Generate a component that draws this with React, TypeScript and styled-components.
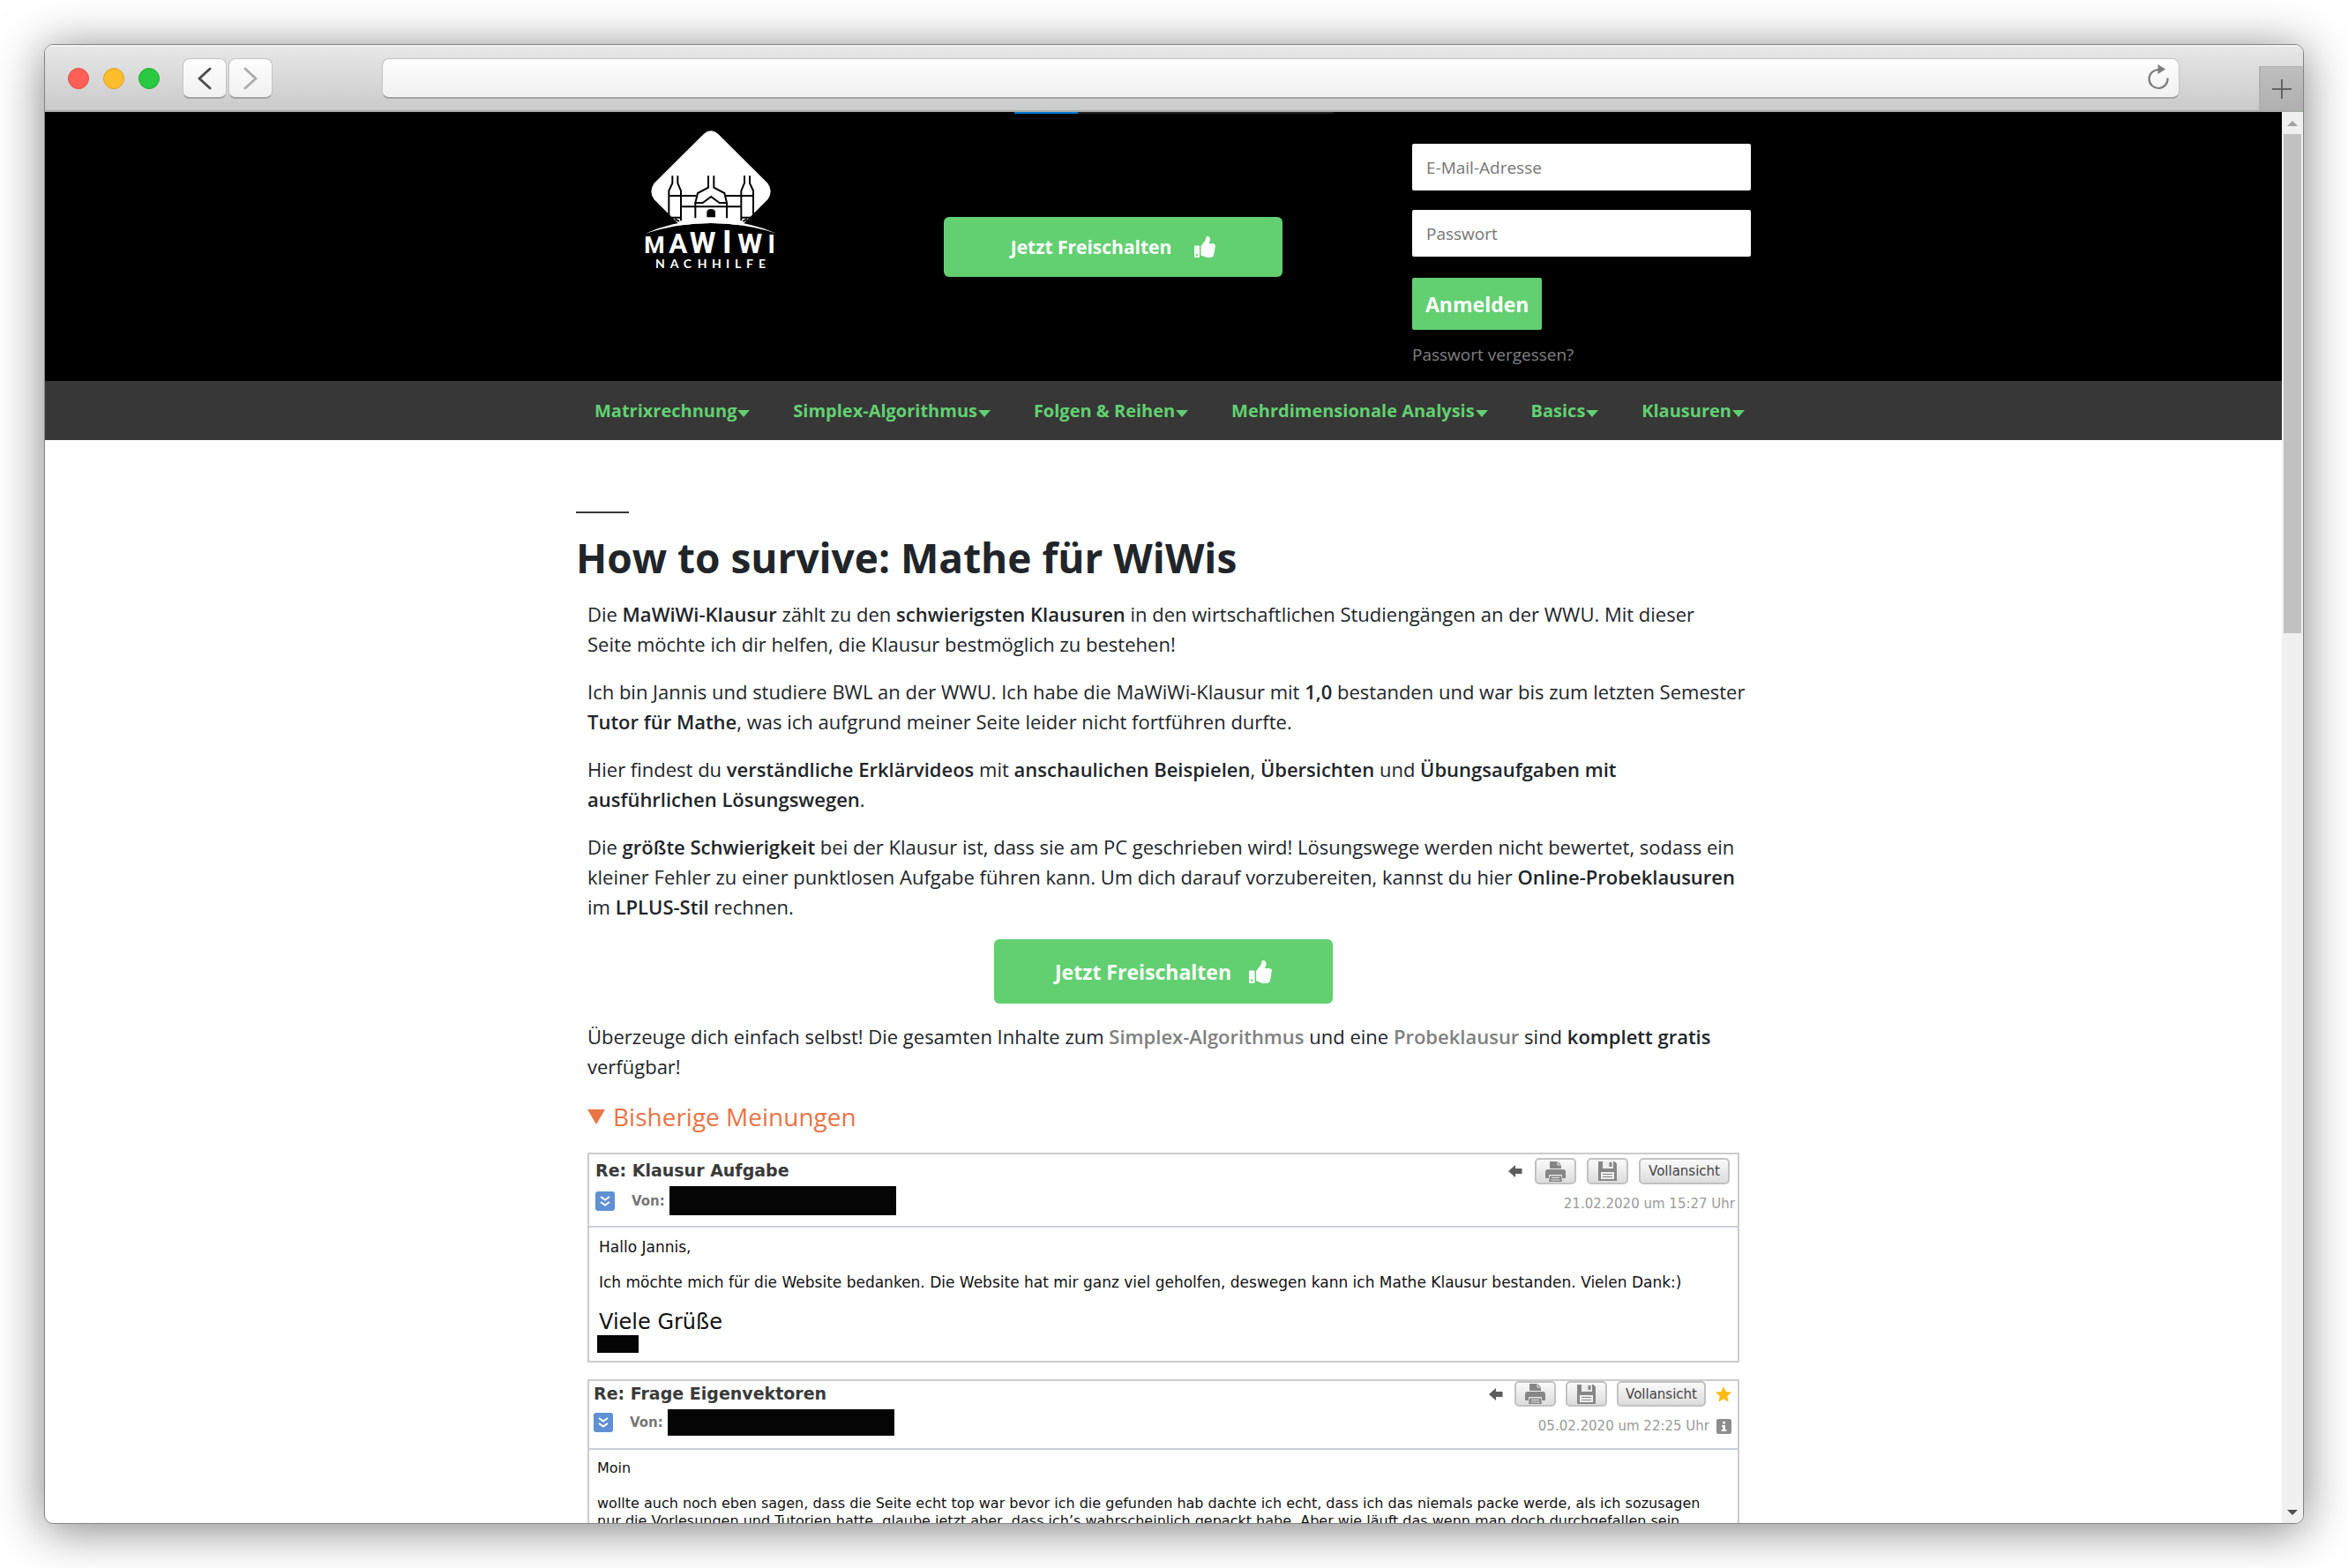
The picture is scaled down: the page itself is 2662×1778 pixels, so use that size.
import React from "react";
import styled, { createGlobalStyle } from "styled-components";
import { FaThumbsUp } from "react-icons/fa";

const green = "#62d071";
const uiFont = `"Open Sans", "Noto Sans", sans-serif`;
const mailFont = `"DejaVu Sans", Verdana, sans-serif`;

const GlobalStyle = createGlobalStyle`
  *, *::before, *::after { box-sizing: border-box; }
  body { margin: 0; background: #fff; font-family: ${uiFont}; color: #212529; }
  button, input { font-family: inherit; border: 0; margin: 0; }
  button { cursor: pointer; }
  p, h1 { margin: 0; }
  b { font-weight: 600; }
`;

/* ---------- browser window ---------- */

const Desktop = styled.div`
  height: 100vh;
  padding: 50px;
  display: flex;
`;

const Frame = styled.div`
  flex: 1;
  min-width: 0;
  display: flex;
  flex-direction: column;
  overflow: hidden;
  border: 1px solid #858585;
  border-radius: 10px;
  background: #fff;
  box-shadow: 0 6px 54px rgba(0, 0, 0, 0.5);
`;

const Toolbar = styled.div`
  flex: none;
  height: 76px;
  display: flex;
  align-items: center;
  padding-left: 26px;
  background: linear-gradient(#e7e7e7, #cacaca);
  border-top: 2px solid #f2f2f2;
  border-bottom: 2px solid #a9aca9;
`;

const Lights = styled.div`
  display: flex;
  gap: 16px;
  margin-right: 26px;
`;

const Light = styled.button<{ $fill: string; $edge: string }>`
  width: 24px;
  height: 24px;
  padding: 0;
  border-radius: 50%;
  background: ${(p) => p.$fill};
  border: 1px solid ${(p) => p.$edge};
`;

const History = styled.div`
  display: flex;
  gap: 2px;
  margin-right: 124px;
`;

const chromeField = `
  height: 46px;
  border: 1px solid #c4c4c4;
  border-bottom: 2px solid #a3a3a3;
  border-radius: 8px;
  background: linear-gradient(#fdfdfd, #f1f1f1);
`;

const HistoryButton = styled.button`
  ${chromeField}
  width: 50px;
  padding: 0;
  display: grid;
  place-items: center;
`;

const AddressBar = styled.div`
  ${chromeField}
  flex: 1;
  display: flex;
  align-items: center;
  margin-right: 90px;
  padding: 0 10px 0 16px;
`;

const AddressInput = styled.input`
  flex: 1;
  height: 100%;
  background: transparent;
  font-size: 21px;
  outline: none;
`;

const ReloadButton = styled.button`
  width: 26px;
  height: 32px;
  padding: 0;
  background: none;
`;

const NewTab = styled.button`
  align-self: flex-end;
  width: 50px;
  height: 50px;
  padding: 0;
  display: grid;
  place-items: center;
  background: linear-gradient(#bebebe, #b0b0b0);
  border-left: 2px solid #b0b0b0;
  border-top: 1px solid #b0b0b0;
`;

const Viewport = styled.div`
  flex: 1;
  min-height: 0;
  display: flex;
`;

const Page = styled.div`
  flex: 1;
  min-width: 0;
  overflow: hidden;
`;

const Scrollbar = styled.div`
  flex: none;
  width: 24px;
  display: flex;
  flex-direction: column;
  background: #f0f0f0;
`;

const ScrollButton = styled.button<{ $down?: boolean }>`
  height: 25px;
  padding: 0;
  display: grid;
  place-items: center;
  background: none;
  &::before {
    content: "";
    border: 6px solid transparent;
    ${(p) =>
      p.$down
        ? "border-top-color: #505050; border-bottom: 0;"
        : "border-bottom-color: #a3a3a3; border-top: 0;"}
  }
`;

const Thumb = styled.div`
  flex: 73;
  margin: 0 2px;
  background: #c1c1c1;
`;

const TrackRest = styled.div`
  flex: 127;
`;

/* ---------- site header ---------- */

const Header = styled.header`
  position: relative;
  background: #000;
`;

const Progress = styled.div`
  position: absolute;
  top: 0;
  left: calc(50% - 169px);
  width: 362px;
  height: 2px;
  background: linear-gradient(90deg, #0078d7 20%, #1f1f1f 20%);
`;

const Container = styled.div`
  max-width: 1332px;
  margin: 0 auto;
`;

const HeaderGrid = styled(Container)`
  display: grid;
  grid-template-columns: 306fr 606fr 420fr;
`;

const LogoCell = styled.a`
  padding-top: 20px;
  justify-self: center;
`;

const CtaCell = styled.div`
  align-self: center;
  justify-self: center;
`;

const Cta = styled.button<{ $large?: boolean }>`
  width: 384px;
  height: ${(p) => (p.$large ? 73 : 68)}px;
  display: flex;
  align-items: center;
  justify-content: center;
  gap: ${(p) => (p.$large ? 20 : 26)}px;
  border-radius: 6px;
  background: ${green};
  color: #fff;
  font-size: ${(p) => (p.$large ? 23 : 21)}px;
  font-weight: 700;
`;

const Login = styled.form`
  display: flex;
  flex-direction: column;
  align-items: flex-start;
  padding: 36px 0 16px 36px;
`;

const Field = styled.input`
  width: 100%;
  height: 53px;
  margin-bottom: 22px;
  padding: 0 16px;
  border-radius: 2px;
  background: #fff;
  font-size: 19px;
  &::placeholder {
    color: #757575;
    opacity: 1;
  }
`;

const LoginButton = styled.button`
  height: 59px;
  margin: 2px 0 14px;
  padding: 0 15px;
  border-radius: 2px;
  background: ${green};
  color: #fff;
  font-size: 23px;
  font-weight: 700;
`;

const Forgot = styled.a`
  font-size: 19px;
  line-height: 28px;
  color: #808080;
  text-decoration: none;
`;

const Nav = styled.nav`
  background: #373737;
`;

const NavRow = styled(Container)`
  height: 67px;
  display: flex;
  align-items: center;
  justify-content: space-between;
  padding: 0 7px 0 21px;
`;

const NavItem = styled.button`
  display: flex;
  align-items: center;
  gap: 1px;
  padding: 0;
  background: none;
  color: ${green};
  font-size: 20px;
  font-weight: 700;
  line-height: 30px;
  &::after {
    content: "";
    margin-top: 6px;
    border: 7px solid transparent;
    border-top: 8px solid ${green};
    border-bottom: 0;
  }
`;

/* ---------- article ---------- */

const Article = styled(Container)`
  padding-top: 81px;
`;

const Rule = styled.div`
  width: 60px;
  height: 2px;
  margin-bottom: 22px;
  background: #373737;
`;

const Title = styled.h1`
  font-size: 46px;
  line-height: 56px;
  font-weight: 700;
  margin-bottom: 19px;
`;

const Content = styled.div`
  display: flex;
  flex-direction: column;
  gap: 20px;
  padding-left: 13px;
`;

const Text = styled.p`
  font-size: 22px;
  line-height: 34px;
`;

const TextLink = styled.a`
  color: #808080;
  font-weight: 600;
  text-decoration: none;
`;

const CtaRow = styled.div`
  display: flex;
  justify-content: center;
  padding-right: 13px;
`;

const Opinions = styled.details`
  padding-right: 13px;
  &[open] > summary {
    margin-bottom: 21px;
  }
`;

const OpinionsTitle = styled.summary`
  display: flex;
  align-items: center;
  gap: 9px;
  color: #e97446;
  font-size: 28px;
  font-weight: 500;
  line-height: 40px;
  cursor: pointer;
  list-style: none;
  &::before {
    content: "";
    border: 10px solid transparent;
    border-top: 17px solid #e97446;
    border-bottom: 0;
  }
`;

/* ---------- mail cards ---------- */

const Mail = styled.section`
  margin-bottom: 19px;
  border: 2px solid #ccc;
  font-family: ${mailFont};
  color: #111;
`;

const MailHead = styled.div<{ $tight?: boolean }>`
  display: flex;
  justify-content: space-between;
  padding: ${(p) => (p.$tight ? "0 7px 13px 5px" : "4px 3px 12px 7px")};
  border-bottom: 2px solid #ccd0da;
`;

const Stack = styled.div<{ $gap: number }>`
  display: flex;
  flex-direction: column;
  gap: ${(p) => p.$gap}px;
`;

const Subject = styled.div`
  font-size: 19px;
  font-weight: 700;
  line-height: 28px;
  color: #3a3a3a;
`;

const Sender = styled.div`
  display: flex;
  align-items: center;
  font-size: 15px;
  font-weight: 700;
  color: #777;
`;

const Expand = styled.button`
  width: 22px;
  height: 22px;
  margin-right: 19px;
  padding: 0;
  display: grid;
  place-items: center;
  border-radius: 3px;
  background: #5f90d3;
`;

const Redacted = styled.span<{ $w: number; $h: number }>`
  display: block;
  width: ${(p) => p.$w}px;
  height: ${(p) => p.$h}px;
  background: #050505;
`;

const SenderName = styled(Redacted)`
  margin-left: 5px;
`;

const Actions = styled.div<{ $inset?: boolean }>`
  display: flex;
  align-items: center;
  justify-content: flex-end;
  gap: ${(p) => (p.$inset ? 12 : 11)}px;
  margin-right: ${(p) => (p.$inset ? 6 : 0)}px;
`;

const IconButton = styled.button`
  width: 16px;
  height: 16px;
  margin-right: 2px;
  padding: 0;
  background: none;
  line-height: 0;
`;

const MailButton = styled.button<{ $tight?: boolean }>`
  height: ${(p) => (p.$tight ? 29 : 30)}px;
  min-width: 47px;
  padding: 0 ${(p) => (p.$tight ? 8 : 9)}px;
  display: grid;
  place-items: center;
  border: 2px solid #c2c2c2;
  border-radius: 5px;
  background: linear-gradient(#fafafa, #dcdcdc);
  color: #444;
  font-size: 15px;
`;

const Stamp = styled.div`
  display: flex;
  align-items: center;
  justify-content: flex-end;
  gap: 8px;
  font-size: 15px;
  line-height: 24px;
  color: #9a9a9a;
`;

const MailBody = styled.div<{ $tight?: boolean }>`
  display: flex;
  flex-direction: column;
  gap: 20px;
  padding: ${(p) => (p.$tight ? "11px 9px" : "12px 11px 9px")};
  font-size: ${(p) => (p.$tight ? 16 : 17)}px;
  line-height: 20px;
`;

const Greeting = styled.p`
  font-size: 24px;
  line-height: 30px;
`;

const Signature = styled(Redacted)`
  margin-left: -2px;
`;

/* ---------- drawings ---------- */

const Chevron = ({ flip, color }: { flip?: boolean; color: string }) => (
  <svg width="16" height="26" viewBox="0 0 16 26" fill="none" stroke={color} strokeWidth="3" strokeLinecap="round" strokeLinejoin="round">
    <path d={flip ? "M2 2 L14 13 L2 24" : "M14 2 L2 13 L14 24"} />
  </svg>
);

const ReloadIcon = () => (
  <svg width="26" height="32" viewBox="0 0 26 32">
    <path d="M13 6 A10.500 10.500 0 1 0 23.500 15.500" fill="none" stroke="#7d7d7d" strokeWidth="2.200" />
    <path d="M12.500 0 L21 5.500 L12.500 11 Z" fill="#7d7d7d" />
  </svg>
);

const PlusIcon = () => (
  <svg width="22" height="22" viewBox="0 0 22 22" stroke="#636363" strokeWidth="2">
    <path d="M11 0 V22 M0 11 H22" />
  </svg>
);

const Tower = () => (
  <g>
    <path d="M187 262 L175 288 V362 L200 384 L216 392 V288 L205 262 Z" fill="#fff" stroke="none" />
    <path d="M187 237 V262 L175 288 V378 M205 237 V262 L216 288 V390 M184 379 H216 M175 305 H268" />
    <path d="M196 384 L210 392" />
  </g>
);

const letters: [string, number, number][] = [
  ["M", 126, 80],
  ["A", 206, 94],
  ["W", 290, 102],
  ["I", 373, 108],
  ["W", 451, 96],
  ["I", 524, 86],
];

const Logo = () => (
  <svg width="152" height="160" viewBox="90 80 456 480" role="img" aria-label="MaWiWi Nachhilfe">
    <path
      d="M294 94 Q318 74 342 94 L511 262 Q531 290 511 318 L342 486 Q318 506 294 486 L125 318 Q105 290 125 262 Z"
      fill="#fff"
    />
    <path d="M95 433 Q318 363 541 433 V520 H95 Z" fill="#000" />
    <g fill="none" stroke="#000" strokeWidth="6">
      <Tower />
      <g transform="translate(637 0) scale(-1 1)">
        <Tower />
      </g>
      <path d="M309 237 V277 L273 296 L265 329 H290 L318.500 308 L347 329 H372 L364 296 L328 277 V237" />
      <path d="M216 342 H421 M265 329 V381 M372 329 V381" />
      <path d="M304 378 V362 Q304 350 318.500 350 Q333 350 333 362 V378 Z" fill="#000" stroke="none" />
    </g>
    <path d="M95 433 Q318 340 541 433 Q318 363 95 433 Z" fill="#fff" />
    <g fill="#fff" fontFamily="Roboto, sans-serif" fontWeight="700" textAnchor="middle">
      {letters.map(([ch, x, size]) => (
        <text key={x} x={x} y="501" fontSize={size}>
          {ch}
        </text>
      ))}
    </g>
    <text x="129 179 224 272 321 369 399 438 480" y="551" fill="#fff" fontFamily="Lato, sans-serif" fontWeight="700" fontSize="42">
      NACHHILFE
    </text>
  </svg>
);

const ExpandIcon = () => (
  <svg width="14" height="14" viewBox="0 0 14 14" fill="none" stroke="#fff" strokeWidth="2">
    <path d="M2 2 L7 5.500 L12 2 M2 8 L7 11.500 L12 8" />
  </svg>
);

const BackIcon = () => (
  <svg width="16" height="16" viewBox="0 0 16 16" fill="#5c5c5c">
    <path d="M0 8 L8 1 V5 H15.500 V11 H8 V15 Z" />
  </svg>
);

const PrintIcon = () => (
  <svg width="23" height="23" viewBox="0 0 23 23" fill="#868686">
    <path d="M5 0 H14 L18 4 V8 H5 Z" />
    <path d="M14 0 V4 H18" fill="none" stroke="#eee" />
    <path d="M3 9 H20 Q23 9 23 12 V19 H19 V15 H4 V19 H0 V12 Q0 9 3 9 Z" />
    <path d="M5 16.500 H18 L19 23 H4 Z" />
    <path d="M7 18.500 H16 M6.500 21 H16.500" stroke="#e8e8e8" strokeWidth="1.200" />
  </svg>
);

const SaveIcon = () => (
  <svg width="21" height="22" viewBox="0 0 21 22">
    <path d="M0 0 H18.500 L21 2.500 V22 H0 Z" fill="#868686" />
    <path d="M5 0 H17 V8 H5 Z M3 12 H18 V20 H3 Z" fill="#eee" />
    <path d="M12.500 1 H15.500 V6 H12.500 Z" fill="#868686" />
    <path d="M5 14.500 H16 M5 17.500 H16" stroke="#868686" strokeWidth="1.200" />
  </svg>
);

const StarIcon = () => (
  <svg width="18" height="18" viewBox="0 0 18 18" fill="#fdbb11">
    <path d="M9 0 L11.600 6 L18 6.700 L13.200 11 L14.600 17.500 L9 14.200 L3.400 17.500 L4.800 11 L0 6.700 L6.400 6 Z" />
  </svg>
);

const InfoIcon = () => (
  <svg width="17" height="17" viewBox="0 0 17 17">
    <rect width="17" height="17" rx="2" fill="#8d8d8d" />
    <path d="M7 3 H10 V5.500 H7 Z M6 7 H10 V12 H11.500 V14 H5.500 V12 H7 V9 H6 Z" fill="#f4f4f4" />
  </svg>
);

/* ---------- composition ---------- */

const navItems = [
  "Matrixrechnung",
  "Simplex-Algorithmus",
  "Folgen & Reihen",
  "Mehrdimensionale Analysis",
  "Basics",
  "Klausuren",
];

type MailProps = {
  subject: string;
  date: string;
  starred?: boolean;
  children: React.ReactNode;
};

const MailCard = ({ subject, date, starred, children }: MailProps) => (
  <Mail>
    <MailHead $tight={starred}>
      <Stack $gap={4}>
        <Subject>{subject}</Subject>
        <Sender>
          <Expand type="button" aria-label="Details anzeigen">
            <ExpandIcon />
          </Expand>
          Von:
          <SenderName $w={257} $h={starred ? 30 : 33} />
        </Sender>
      </Stack>
      <Stack $gap={10}>
        <Actions $inset={!starred}>
          <IconButton type="button" aria-label="Antworten">
            <BackIcon />
          </IconButton>
          <MailButton type="button" $tight={starred} aria-label="Drucken">
            <PrintIcon />
          </MailButton>
          <MailButton type="button" $tight={starred} aria-label="Speichern">
            <SaveIcon />
          </MailButton>
          <MailButton type="button" $tight={starred}>
            Vollansicht
          </MailButton>
          {starred && <StarIcon />}
        </Actions>
        <Stamp>
          {date}
          {starred && <InfoIcon />}
        </Stamp>
      </Stack>
    </MailHead>
    <MailBody $tight={starred}>{children}</MailBody>
  </Mail>
);

export default function App() {
  return (
    <>
      <GlobalStyle />
      <Desktop>
        <Frame>
          <Toolbar>
            <Lights>
              <Light type="button" aria-label="Schließen" $fill="#ff5f57" $edge="#e24c41" />
              <Light type="button" aria-label="Minimieren" $fill="#ffbd2e" $edge="#dfa023" />
              <Light type="button" aria-label="Maximieren" $fill="#28c940" $edge="#1fac2d" />
            </Lights>
            <History>
              <HistoryButton type="button" aria-label="Zurück">
                <Chevron color="#4d4d4d" />
              </HistoryButton>
              <HistoryButton type="button" aria-label="Vorwärts">
                <Chevron flip color="#adadad" />
              </HistoryButton>
            </History>
            <AddressBar>
              <AddressInput type="text" aria-label="Adresse" />
              <ReloadButton type="button" aria-label="Neu laden">
                <ReloadIcon />
              </ReloadButton>
            </AddressBar>
            <NewTab type="button" aria-label="Neuer Tab">
              <PlusIcon />
            </NewTab>
          </Toolbar>
          <Viewport>
            <Page>
              <Header>
                <Progress />
                <HeaderGrid>
                  <LogoCell href="#">
                    <Logo />
                  </LogoCell>
                  <CtaCell>
                    <Cta type="button">
                      Jetzt Freischalten <FaThumbsUp size={24} />
                    </Cta>
                  </CtaCell>
                  <Login>
                    <Field type="email" placeholder="E-Mail-Adresse" aria-label="E-Mail-Adresse" />
                    <Field type="password" placeholder="Passwort" aria-label="Passwort" />
                    <LoginButton type="submit">Anmelden</LoginButton>
                    <Forgot href="#">Passwort vergessen?</Forgot>
                  </Login>
                </HeaderGrid>
              </Header>
              <Nav>
                <NavRow>
                  {navItems.map((item) => (
                    <NavItem key={item} type="button">
                      {item}
                    </NavItem>
                  ))}
                </NavRow>
              </Nav>
              <Article as="main">
                <Rule />
                <Title>How to survive: Mathe für WiWis</Title>
                <Content>
                  <Text>
                    Die <b>MaWiWi-Klausur</b> zählt zu den <b>schwierigsten Klausuren</b> in den wirtschaftlichen
                    Studiengängen an der WWU. Mit dieser
                    <br />
                    Seite möchte ich dir helfen, die Klausur bestmöglich zu bestehen!
                  </Text>
                  <Text>
                    Ich bin Jannis und studiere BWL an der WWU. Ich habe die MaWiWi-Klausur mit <b>1,0</b> bestanden
                    und war bis zum letzten Semester
                    <br />
                    <b>Tutor für Mathe</b>, was ich aufgrund meiner Seite leider nicht fortführen durfte.
                  </Text>
                  <Text>
                    Hier findest du <b>verständliche Erklärvideos</b> mit <b>anschaulichen Beispielen</b>,{" "}
                    <b>Übersichten</b> und <b>Übungsaufgaben mit</b>
                    <br />
                    <b>ausführlichen Lösungswegen</b>.
                  </Text>
                  <Text>
                    Die <b>größte Schwierigkeit</b> bei der Klausur ist, dass sie am PC geschrieben wird! Lösungswege
                    werden nicht bewertet, sodass ein
                    <br />
                    kleiner Fehler zu einer punktlosen Aufgabe führen kann. Um dich darauf vorzubereiten, kannst du
                    hier <b>Online-Probeklausuren</b>
                    <br />
                    im <b>LPLUS-Stil</b> rechnen.
                  </Text>
                  <CtaRow>
                    <Cta type="button" $large>
                      Jetzt Freischalten <FaThumbsUp size={26} />
                    </Cta>
                  </CtaRow>
                  <Text>
                    Überzeuge dich einfach selbst! Die gesamten Inhalte zum{" "}
                    <TextLink href="#">Simplex-Algorithmus</TextLink> und eine{" "}
                    <TextLink href="#">Probeklausur</TextLink> sind <b>komplett gratis</b>
                    <br />
                    verfügbar!
                  </Text>
                  <Opinions open>
                    <OpinionsTitle>Bisherige Meinungen</OpinionsTitle>
                    <MailCard subject="Re: Klausur Aufgabe" date="21.02.2020 um 15:27 Uhr">
                      <p>Hallo Jannis,</p>
                      <p>
                        Ich möchte mich für die Website bedanken. Die Website hat mir ganz viel geholfen, deswegen kann
                        ich Mathe Klausur bestanden. Vielen Dank:)
                      </p>
                      <div>
                        <Greeting>Viele Grüße</Greeting>
                        <Signature $w={47} $h={20} />
                      </div>
                    </MailCard>
                    <MailCard subject="Re: Frage Eigenvektoren" date="05.02.2020 um 22:25 Uhr" starred>
                      <p>Moin</p>
                      <p>
                        wollte auch noch eben sagen, dass die Seite echt top war bevor ich die gefunden hab dachte ich
                        echt, dass ich das niemals packe werde, als ich sozusagen
                        <br />
                        nur die Vorlesungen und Tutorien hatte, glaube jetzt aber, dass ich’s wahrscheinlich gepackt
                        habe. Aber wie läuft das wenn man doch durchgefallen sein
                      </p>
                    </MailCard>
                  </Opinions>
                </Content>
              </Article>
            </Page>
            <Scrollbar>
              <ScrollButton type="button" aria-label="Nach oben" />
              <Thumb />
              <TrackRest />
              <ScrollButton type="button" aria-label="Nach unten" $down />
            </Scrollbar>
          </Viewport>
        </Frame>
      </Desktop>
    </>
  );
}
